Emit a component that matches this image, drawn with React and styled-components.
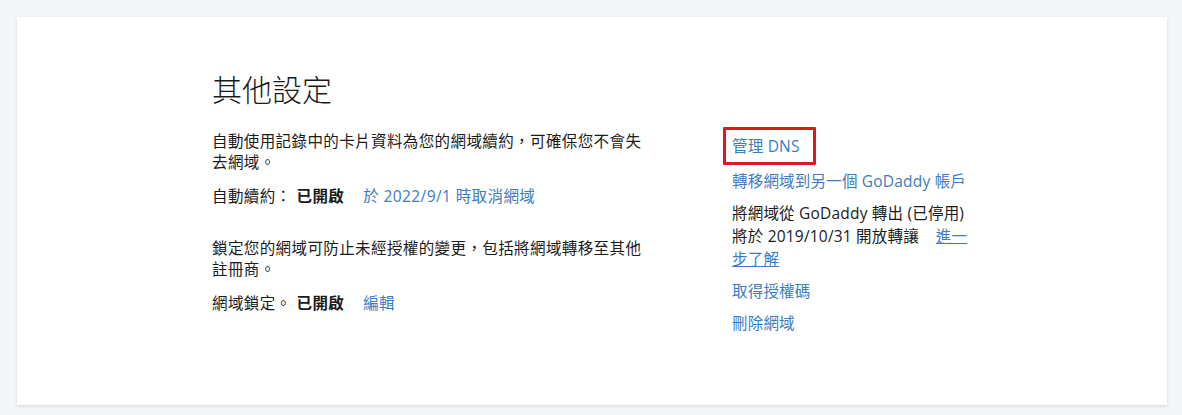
import React from "react";
import styled, { createGlobalStyle } from "styled-components";

const Global = createGlobalStyle`
  html, body { margin: 0; padding: 0; }
  body {
    background: #f4f5f7;
    font-family: "Open Sans", "Noto Sans CJK TC", sans-serif;
    color: #1b1b1b;
  }
`;

const Page = styled.div`
  padding: 17px 15px 10px 17px;
`;

const Card = styled.section`
  background: #ffffff;
  box-shadow: 0 1px 3px rgba(0, 0, 0, 0.12);
  height: 388px;
  box-sizing: border-box;
  padding: 53px 0 0;
`;

const Inner = styled.div`
  width: 760px;
  margin: 0 auto;
`;

const Title = styled.h2`
  margin: 0 0 24px;
  font-family: "Noto Sans CJK TC", sans-serif;
  font-weight: 300;
  font-size: 30px;
  line-height: 36px;
  color: #1a1a1a;
`;

const Columns = styled.div`
  display: flex;
  justify-content: space-between;
  align-items: flex-start;
`;

const Left = styled.div`
  width: 440px;
  font-size: 16px;
`;

const Para = styled.p`
  margin: ${(p) => p.$top || 0}px 0 0;
  line-height: 21px;
  font-family: "Noto Sans CJK TC", sans-serif;
  font-size: 15.5px;
  letter-spacing: 0.4px;
`;

const StatusRow = styled.div`
  margin-top: 13px;
  line-height: 21px;
  font-family: "Noto Sans CJK TC", sans-serif;
  font-size: 15.5px;
  letter-spacing: 0.4px;
  display: flex;
  align-items: baseline;
`;

const Label = styled.span`
  margin-right: 5px;
`;

const Strong = styled.strong`
  font-weight: 700;
`;

const Link = styled.a`
  color: #3b7cc2;
  text-decoration: ${(p) => (p.$underline ? "underline" : "none")};
  margin-left: ${(p) => p.$gap || 0}px;
  font-family: "Open Sans", "Noto Sans CJK TC", sans-serif;
  cursor: pointer;
`;

const Right = styled.ul`
  width: 240px;
  list-style: none;
  margin: 0;
  padding: 5px 0 0;
  font-size: 15.5px;
  letter-spacing: 0.2px;
`;

const Item = styled.li`
  line-height: 23px;
  margin-bottom: ${(p) => p.$mb ?? 9}px;
`;

const Plain = styled.div`
  color: #1b1b1b;
  font-family: "Open Sans", "Noto Sans CJK TC", sans-serif;
`;

const Highlight = styled.span`
  position: relative;
  display: inline-block;
  &::after {
    content: "";
    position: absolute;
    left: -9px;
    right: -16px;
    top: -8px;
    bottom: -7px;
    border: 3px solid #e3161e;
    border-radius: 1px;
    pointer-events: none;
  }
`;

export default function App() {
  return (
    <>
      <Global />
      <Page>
        <Card>
          <Inner>
            <Title>其他設定</Title>
            <Columns>
              <Left>
                <Para>自動使用記錄中的卡片資料為您的網域續約，可確保您不會失去網域。</Para>
                <StatusRow>
                  <Label>自動續約：</Label>
                  <Strong>已開啟</Strong>
                  <Link $gap={19}>於 2022/9/1 時取消網域</Link>
                </StatusRow>
                <Para $top={30}>鎖定您的網域可防止未經授權的變更，包括將網域轉移至其他註冊商。</Para>
                <StatusRow>
                  <Label>網域鎖定。</Label>
                  <Strong>已開啟</Strong>
                  <Link $gap={19}>編輯</Link>
                </StatusRow>
              </Left>
              <Right>
                <Item $mb={12}>
                  <Highlight>
                    <Link>管理 DNS</Link>
                  </Highlight>
                </Item>
                <Item>
                  <Link>轉移網域到另一個 GoDaddy 帳戶</Link>
                </Item>
                <Item>
                  <Plain>
                    將網域從 GoDaddy 轉出 (已停用)
                    <br />
                    {"將於 2019/10/31 開放轉讓\u00a0\u00a0\u00a0 "}
                    <Link $underline>進一步了解</Link>
                  </Plain>
                </Item>
                <Item>
                  <Link>取得授權碼</Link>
                </Item>
                <Item>
                  <Link>刪除網域</Link>
                </Item>
              </Right>
            </Columns>
          </Inner>
        </Card>
      </Page>
    </>
  );
}
